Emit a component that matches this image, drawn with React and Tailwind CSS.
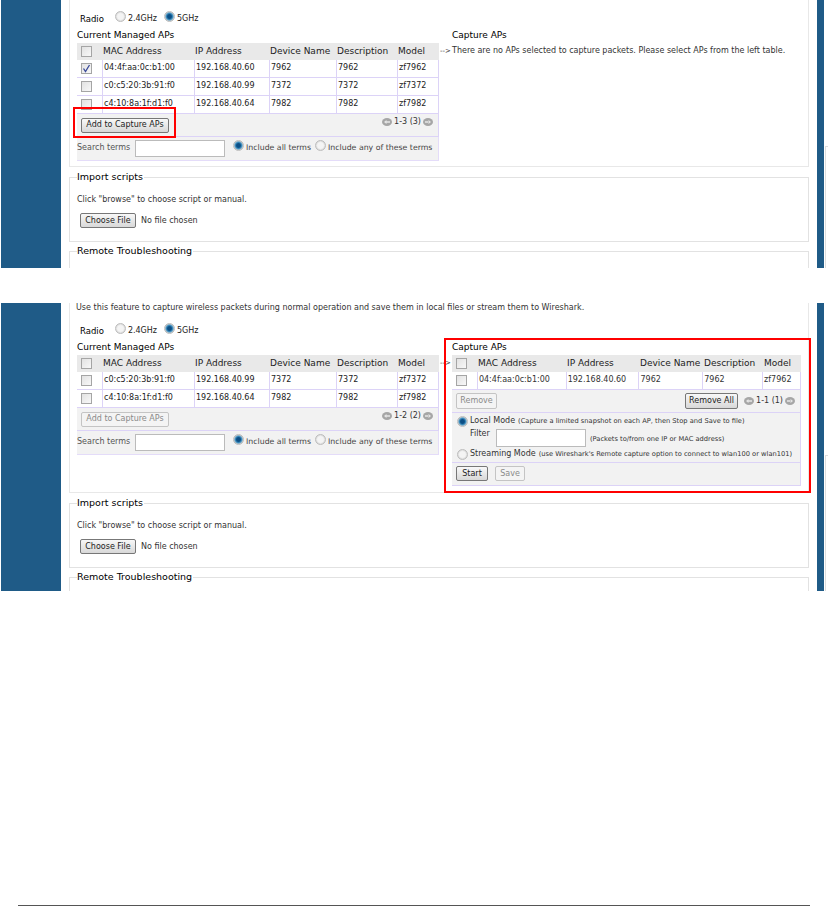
const Radio = ({on}) => (
  <span className={`inline-block rounded-full border border-[#bdbdbd] shrink-0 w-[11px] h-[11px] ${on ? "bg-[radial-gradient(circle,#0b4f86_30%,#3f8fbf_50%,#d4d4d4_75%)]" : "bg-[radial-gradient(circle,#f4f4f4_45%,#cfcfcf_85%)]"}`}></span>
)

const Check = ({on}) => (
  <span className="w-[11px] h-[11px] border border-[#a5a5a5] bg-gradient-to-br from-[#e2e2e2] to-[#f8f8f8] flex items-center justify-center shrink-0">
    {on && (
      <svg width="9" height="9" viewBox="0 0 9 9">
        <path d="M1.5 4.5 L3.5 7.5 L7.5 1" stroke="#3a4a9a" strokeWidth="1.3" fill="none" />
      </svg>
    )}
  </span>
)

const PagerIcon = ({left}) => (
  <svg width="10" height="8" viewBox="0 0 10 8" className="shrink-0">
    <ellipse cx="5" cy="4" rx="5" ry="4" fill="#a6a6a6" />
    <path d={left ? "M2 4 L4.5 2 V6 Z M4 3.3 H8 V4.7 H4 Z" : "M8 4 L5.5 2 V6 Z M2 3.3 H6 V4.7 H2 Z"} fill="#e6e6e6" />
  </svg>
)

const Pager = ({text}) => (
  <div className="flex items-center gap-[2px] text-[8px] leading-none text-[#333] whitespace-nowrap">
    <PagerIcon left />
    <span>{text}</span>
    <PagerIcon />
  </div>
)

const Btn = ({children, off, className = ""}) => (
  <span className={`inline-flex items-center justify-center border rounded-[2px] text-[8px] leading-none whitespace-nowrap shrink-0 ${off ? "border-[#c4c4c4] text-[#8a8a8a] bg-[#f4f4f4]" : "border-[#777] text-[#222] bg-gradient-to-b from-[#f8f8f8] to-[#d8d8d8]"} ${className}`}>
    {children}
  </span>
)

const ApTable = ({rows, cols, checked}) => (
  <div>
    <div className="flex h-[17px] bg-[#e9e9e9] items-center text-[9px] text-[#222] whitespace-nowrap">
      <div className="flex pl-[4px]" style={{width: cols[0]}}><Check /></div>
      <div className="pl-[1px]" style={{width: cols[1]}}>MAC Address</div>
      <div className="pl-[1px]" style={{width: cols[2]}}>IP Address</div>
      <div className="pl-[1px]" style={{width: cols[3]}}>Device Name</div>
      <div className="pl-[1px]" style={{width: cols[4]}}>Description</div>
      <div className="pl-[1px]" style={{width: cols[5]}}>Model</div>
    </div>
    {rows.map((r, i) => (
      <div key={r[0]} className="flex h-[18px] items-center border-b border-r border-[#dcd3f7] bg-white whitespace-nowrap">
        <div className="flex pl-[4px] h-full items-center" style={{width: cols[0]}}><Check on={checked === i} /></div>
        {r.map((c, j) => (
          <div key={j} className="pl-[1px] h-full flex items-center border-l border-[#dcd3f7]" style={{width: cols[j + 1]}}>{c}</div>
        ))}
      </div>
    ))}
  </div>
)

const Fieldset = ({title, children, className = ""}) => (
  <div className={`relative border border-[#e2e2e2] mr-[8px] ${className}`}>
    <span className="absolute left-[7px] top-[-6px] bg-white pr-[1px] text-[9.5px] leading-none text-black whitespace-nowrap">{title}</span>
    {children}
  </div>
)

const SearchRow = () => (
  <div className="flex items-center h-[24px] bg-[#f2f2f2] border-b border-r border-[#e4dcf9] whitespace-nowrap text-[7.8px]">
    <span className="w-[58px] shrink-0 text-[#555] text-[8px]">Search terms</span>
    <span className="w-[90px] h-[17px] bg-white border border-[#bbb] shrink-0"></span>
    <span className="ml-[8px] mr-[2px] -mt-[2px]"><Radio on /></span>
    <span className="text-[#444]">Include all terms</span>
    <span className="ml-[4px] mr-[2px] -mt-[2px]"><Radio /></span>
    <span className="text-[#444]">Include any of these terms</span>
  </div>
)

const leftCols = [25, 92, 75, 67, 61, 41]
const rightCols = [25, 89, 73, 64, 60, 38]

const RadioLine = ({top}) => (
  <div className="flex items-center text-[8.5px] ml-[3px] text-[#222]" style={{marginTop: top}}>
    <span className="text-black">Radio</span>
    <span className="ml-[11px] mr-[2px] -mt-[1px]"><Radio /></span>
    <span className="text-[8px] mt-[1px]">2.4GHz</span>
    <span className="ml-[7px] mr-[2px] -mt-[1px]"><Radio on /></span>
    <span className="text-[8px] mt-[1px]">5GHz</span>
  </div>
)

const ManagedAps = ({rows, checked, pager, offAdd}) => (
  <div className="w-[362px] shrink-0">
    <div className="text-black h-[13px] leading-[10px] text-[9px]">Current Managed APs</div>
    <ApTable rows={rows} cols={leftCols} checked={checked} />
    <div className="flex justify-between h-[23px] bg-[#f2f2f2] border-b border-r border-[#dcd3f7] pl-[4px] pr-[5px] pt-[4px]">
      <Btn off={offAdd} className="w-[88px] h-[15px]">Add to Capture APs</Btn>
      <div className="self-start"><Pager text={pager} /></div>
    </div>
    <SearchRow />
  </div>
)

const Bottom = () => (
  <>
    <Fieldset title="Import scripts" className="mt-[10px] h-[65px]">
      <div className="pl-[7px] pt-[16px] text-[#333]">Click "browse" to choose script or manual.</div>
      <div className="flex items-center pl-[10px] pt-[7px] text-[#333]">
        <Btn className="w-[56px] h-[15px] text-[8.5px]">Choose File</Btn>
        <span className="ml-[5px]">No file chosen</span>
      </div>
    </Fieldset>
    <Fieldset title="Remote Troubleshooting" className="mt-[9px] flex-1 border-b-0"></Fieldset>
  </>
)

const Shot = ({height, stripTop, children}) => (
  <div className="flex" style={{height}}>
    <div className="w-[60px] ml-[1px] bg-[#1f5b87] shrink-0"></div>
    <div className="flex-1 flex flex-col min-w-0 pl-[8px]">{children}</div>
    <div className="w-[7px] bg-[#1f5b87] shrink-0"></div>
    <div className="w-[4px] shrink-0 flex flex-col">
      <div className="shrink-0" style={{height: stripTop}}></div>
      <div className="flex-1 ml-[1px] border-l border-t border-[#dddddd]"></div>
    </div>
  </div>
)

export default function App() {
  return (
    <div className="w-[828px] h-[906px] bg-white text-[8px] text-[#222] font-['DejaVu_Sans',sans-serif] relative overflow-hidden">
      <Shot height={268} stripTop={146}>
        <div className="border border-t-0 border-[#e8e8e8] mr-[8px] h-[167px] pl-[7px]">
          <RadioLine top={12} />
          <div className="flex mt-[4px]">
            <ManagedAps
              checked={0}
              pager="1-3 (3)"
              rows={[
                ["04:4f:aa:0c:b1:00", "192.168.40.60", "7962", "7962", "zf7962"],
                ["c0:c5:20:3b:91:f0", "192.168.40.99", "7372", "7372", "zf7372"],
                ["c4:10:8a:1f:d1:f0", "192.168.40.64", "7982", "7982", "zf7982"],
              ]}
            />
            <div className="pl-[1px] text-[#333]">
              <div className="h-[13px] leading-[10px] pl-[12px] text-[9px] text-black">Capture APs</div>
              <div className="h-[17px] flex items-center whitespace-nowrap"><span className="w-[12px] text-[7px]">--&gt;</span>There are no APs selected to capture packets. Please select APs from the left table.</div>
            </div>
          </div>
        </div>
        <Bottom />
      </Shot>

      <div className="h-[35px]"></div>

      <Shot height={288} stripTop={152}>
        <div className="border border-t-0 border-[#e8e8e8] mr-[8px] h-[190px] pl-[7px]">
          <div className="h-[10px] leading-[9px] -ml-[1px] text-[#333] whitespace-nowrap">Use this feature to capture wireless packets during normal operation and save them in local files or stream them to Wireshark.</div>
          <RadioLine top={11} />
          <div className="flex mt-[4px]">
            <ManagedAps
              pager="1-2 (2)"
              offAdd
              rows={[
                ["c0:c5:20:3b:91:f0", "192.168.40.99", "7372", "7372", "zf7372"],
                ["c4:10:8a:1f:d1:f0", "192.168.40.64", "7982", "7982", "zf7982"],
              ]}
            />
            <div className="pl-[1px] text-[#333]">
              <div className="h-[13px] leading-[10px] pl-[12px] text-[9px] text-black">Capture APs</div>
              <div className="flex">
                <span className="h-[17px] flex items-center w-[12px] text-[7px]">--&gt;</span>
                <div className="w-[349px]">
                  <ApTable
                    cols={rightCols}
                    rows={[["04:4f:aa:0c:b1:00", "192.168.40.60", "7962", "7962", "zf7962"]]}
                  />
                  <div className="flex items-center h-[23px] bg-[#f2f2f2] border-b border-r border-[#dcd3f7] pl-[4px] pr-[5px]">
                    <Btn off className="w-[41px] h-[16px]">Remove</Btn>
                    <Btn className="w-[53px] h-[16px] ml-auto">Remove All</Btn>
                    <span className="ml-[6px]"><Pager text="1-1 (1)" /></span>
                  </div>
                  <div className="h-[50px] bg-[#f2f2f2] border-b border-r border-[#dcd3f7] pl-[5px] text-[#333] whitespace-nowrap">
                    <div className="flex items-center h-[17px]">
                      <Radio on />
                      <span className="ml-[2px]">Local Mode</span>
                      <span className="ml-[3px] text-[6.7px]">(Capture a limited snapshot on each AP, then Stop and Save to file)</span>
                    </div>
                    <div className="flex items-start h-[17px] pl-[13px]">
                      <span className="text-[8px] w-[26px] shrink-0 -mt-[2px]">Filter</span>
                      <span className="w-[90px] h-[18px] -mt-[1px] bg-white border border-[#bbb] shrink-0"></span>
                      <span className="ml-[4px] mt-[4px] text-[6.7px]">(Packets to/from one IP or MAC address)</span>
                    </div>
                    <div className="flex items-center h-[15px]">
                      <Radio />
                      <span className="ml-[2px]">Streaming Mode</span>
                      <span className="ml-[3px] text-[6.7px]">(use Wireshark's Remote capture option to connect to wlan100 or wlan101)</span>
                    </div>
                  </div>
                  <div className="flex items-center gap-[7px] h-[23px] bg-[#f2f2f2] border-b border-r border-[#dcd3f7] pl-[4px]">
                    <Btn className="w-[32px] h-[15px] text-[8.5px]">Start</Btn>
                    <Btn off className="w-[30px] h-[15px]">Save</Btn>
                  </div>
                </div>
              </div>
            </div>
          </div>
        </div>
        <Bottom />
      </Shot>

      {/* red callouts drawn on top of the screenshots */}
      <div className="absolute left-[73px] top-[107px] w-[103px] h-[31px] border-[2px] border-[#f00]"></div>
      <div className="absolute left-[444px] top-[338px] w-[367px] h-[155px] border-[2px] border-[#f00]"></div>

      <div className="absolute left-[18px] right-[18px] top-[905px] h-px bg-[#555]"></div>
    </div>
  )
}
